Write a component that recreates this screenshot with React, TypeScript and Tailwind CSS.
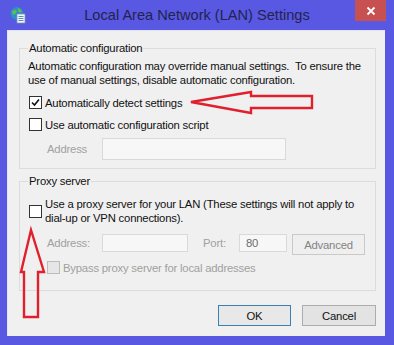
import React from 'react';

const font = { fontFamily: '"Liberation Sans", Arial, sans-serif' };

function CheckBox({ checked = false, disabled = false }: { checked?: boolean; disabled?: boolean }) {
  return (
    <div
      className={
        'w-[13px] h-[13px] shrink-0 border flex items-center justify-center ' +
        (disabled ? 'border-[#bcbcbc] bg-[#e6e6e6]' : 'border-[#333333] bg-white')
      }
    >
      {checked && (
        <svg width="11" height="11" viewBox="0 0 11 11">
          <path d="M2 5.5 L4.5 8 L9 2.5" fill="none" stroke="#111" strokeWidth="1.6" />
        </svg>
      )}
    </div>
  );
}

function GroupBox({ title, className, children }: { title: string; className: string; children: React.ReactNode }) {
  return (
    <div className={'ml-[11px] w-[357px] border border-[#dcdcdc] pl-[9px] ' + className}>
      <div className="-mt-[8px] h-[15px] leading-[15px]">
        <span className="bg-[#f0f0f0] -ml-[1px] px-[1px] text-[#111]">{title}</span>
      </div>
      {children}
    </div>
  );
}

function AppIcon() {
  return (
    <svg width="18" height="18" viewBox="0 0 18 18">
      <circle cx="8" cy="7.5" r="6.5" fill="#2f8fc8" />
      <path d="M3 5 Q6 3 8 5 Q7 8 4 9 Z M9 2 Q12 3 13 6 Q10 7 9 5 Z" fill="#5fbf4a" />
      <rect x="8" y="8" width="8" height="9" fill="#f4f8fc" stroke="#7a95b5" strokeWidth="0.8" />
      <path d="M9.5 10.5 H14.5 M9.5 12.5 H14.5 M9.5 14.5 H14.5" stroke="#4f7bb0" strokeWidth="0.9" />
    </svg>
  );
}

export default function App() {
  return (
    <div className="relative w-[394px] h-[345px] bg-[#5858e2] overflow-hidden" style={font}>
      {/* title bar */}
      <div className="relative h-[30px] flex items-start">
        <div className="ml-[9px] mt-[6px]">
          <AppIcon />
        </div>
        <div className="absolute left-0 right-0 top-[5px] text-center text-[14.6px] leading-[20px] text-[#23234e]">
          Local Area Network (LAN) Settings
        </div>
        <div className="absolute left-[355px] top-0 w-[31px] h-[21px] bg-[#c75050] flex items-center justify-center">
          <svg width="10" height="10" viewBox="0 0 10 10">
            <path d="M1.5 1.5 L8.5 8.5 M8.5 1.5 L1.5 8.5" stroke="#fff" strokeWidth="1.8" />
          </svg>
        </div>
      </div>

      {/* client area */}
      <div className="ml-[7px] w-[378px] h-[306px] bg-[#f0f0f0] border-t border-l border-[#e4e4f4] text-[11.3px] tracking-[-0.2px] text-[#111] leading-[14px]">
        <div className="h-[17px]" />
        <GroupBox title="Automatic configuration" className="h-[121px]">
          <div className="mt-[3px] -ml-[1px] whitespace-nowrap">
            Automatic configuration may override manual settings.&nbsp; To ensure the
            <br />
            use of manual settings, disable automatic configuration.
          </div>
          <div className="mt-[9px] flex items-center gap-[3px] h-[13px]">
            <CheckBox checked />
            <span>Automatically detect settings</span>
          </div>
          <div className="mt-[9px] flex items-center gap-[3px] h-[13px]">
            <CheckBox />
            <span>Use automatic configuration script</span>
          </div>
          <div className="mt-[7px] ml-[18px] flex items-center h-[22px]">
            <span className="w-[55px] text-[#a0a0a0]">Address</span>
            <div className="w-[184px] h-[22px] border border-[#d9d9d9] bg-[#f7f7f7]" />
          </div>
        </GroupBox>

        <div className="h-[12px]" />
        <GroupBox title="Proxy server" className="h-[110px]">
          <div className="mt-[8px] flex items-center gap-[3px]">
            <CheckBox />
            <span className="whitespace-nowrap">
              Use a proxy server for your LAN (These settings will not apply to
              <br />
              dial-up or VPN connections).
            </span>
          </div>
          <div className="mt-[9px] ml-[18px] flex items-start h-[21px] text-[#a0a0a0]">
            <span className="w-[55px] leading-[18px]">Address:</span>
            <div className="w-[86px] h-[18px] border border-[#d9d9d9] bg-[#f7f7f7]" />
            <span className="ml-[15px] w-[36px] leading-[18px]">Port:</span>
            <div className="w-[48px] h-[18px] border border-[#d9d9d9] bg-[#f7f7f7] pl-[6px] leading-[16px] text-[#6d6d6d]">
              80
            </div>
            <div className="ml-[5px] w-[73px] h-[21px] border border-[#c9c9c9] bg-[#efefef] flex items-center justify-center text-[#838383]">
              Advanced
            </div>
          </div>
          <div className="mt-[6px] ml-[18px] flex items-center gap-[3px] h-[13px] text-[#a0a0a0]">
            <CheckBox disabled />
            <span>Bypass proxy server for local addresses</span>
          </div>
        </GroupBox>

        <div className="mt-[14px] ml-[210px] flex gap-[11px]">
          <div className="w-[73px] h-[21px] border border-[#3c7fb1] bg-[#e8e8e8] flex items-center justify-center">
            OK
          </div>
          <div className="w-[74px] h-[21px] border border-[#acacac] bg-[#e3e3e3] flex items-center justify-center">
            Cancel
          </div>
        </div>
      </div>

      {/* red annotation arrows */}
      <svg className="absolute inset-0 pointer-events-none" width="394" height="345" viewBox="0 0 394 345">
        <path
          d="M191 102 L251 92 L251 96 L312 96 L312 108 L251 108 L251 113 Z"
          fill="none"
          stroke="#e0202c"
          strokeWidth="2.4"
          strokeLinejoin="miter"
        />
        <path
          d="M31 230 L44 272 L38 272 L38 317 L24 317 L24 272 L21 272 Z"
          fill="none"
          stroke="#e0202c"
          strokeWidth="2.4"
          strokeLinejoin="miter"
        />
      </svg>
    </div>
  );
}
